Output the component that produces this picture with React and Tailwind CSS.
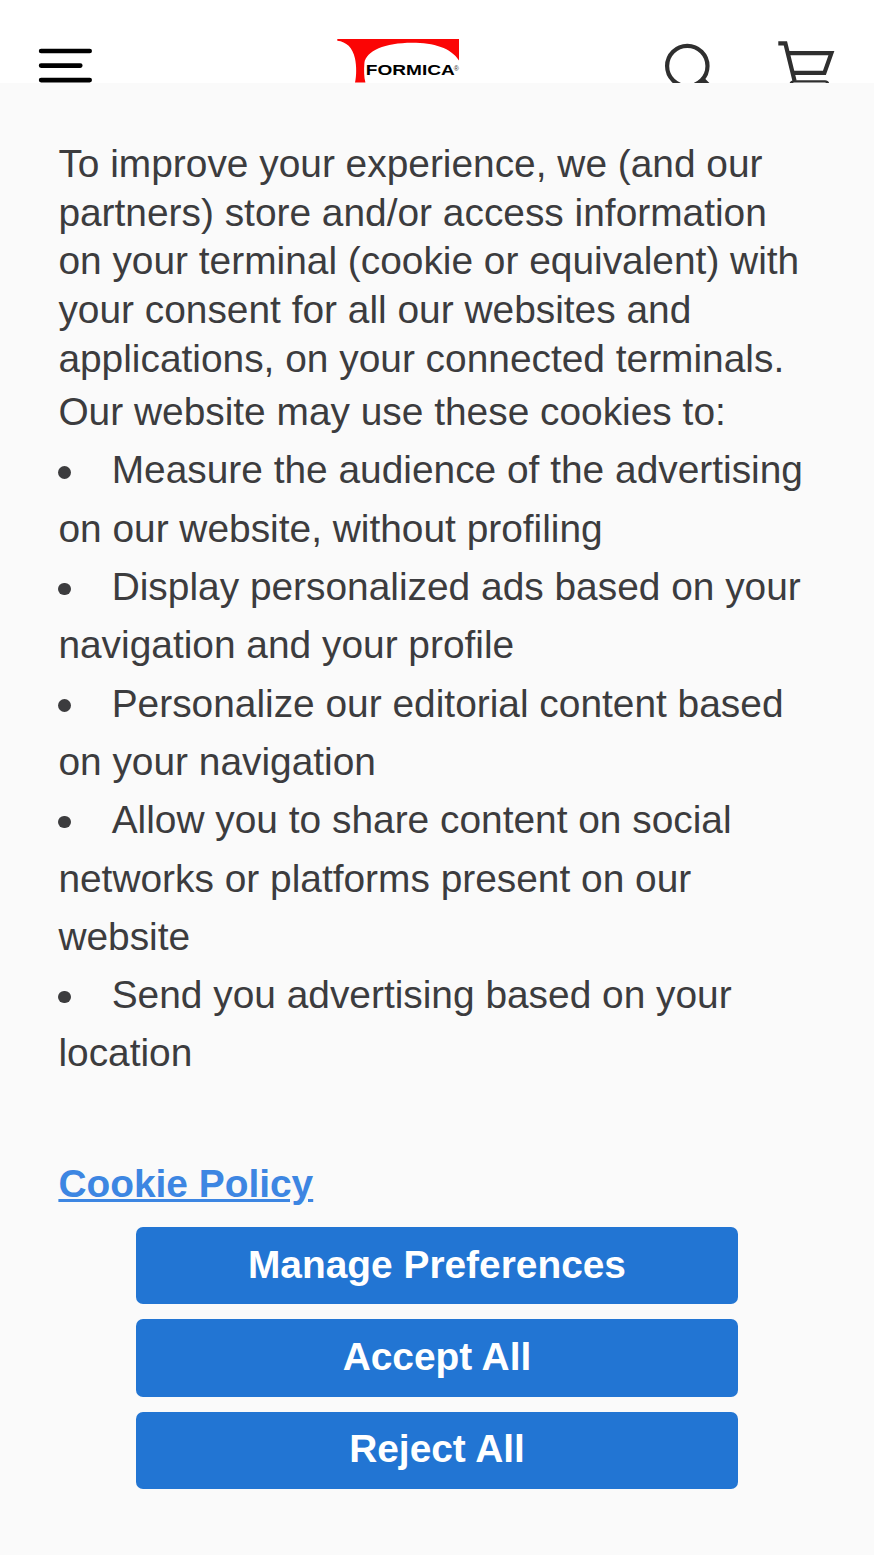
const uses = [
  ["Measure the audience of the advertising", "on our website, without profiling"],
  ["Display personalized ads based on your", "navigation and your profile"],
  ["Personalize our editorial content based", "on your navigation"],
  ["Allow you to share content on social", "networks or platforms present on our", "website"],
  ["Send you advertising based on your", "location"],
];

const actions = ["Manage Preferences", "Accept All", "Reject All"];

function MenuIcon() {
  return (
    <svg width="54" height="36" viewBox="0 0 54 36" fill="none" stroke="#000" strokeWidth="4.6" strokeLinecap="round">
      <path d="M3.1 4H51.7M3.1 18.6H42.3M3.1 33.1H51.7" />
    </svg>
  );
}

function Logo() {
  return (
    <svg width="126" height="46" viewBox="0 0 126 46">
      <path
        d="M0.3 1H122V22.5C114 10 97 4.8 75 4.8C48 4.8 29 13 27.4 25C26.8 32 27 39 28.4 44.6H18C19.6 38 19.6 28 18 20.5C15.5 9.5 9.5 3.8 0.3 2.8Z"
        fill="#fb0505"
      />
      <text
        x="28.8"
        y="37"
        fontSize="14"
        fontWeight="700"
        fontFamily="'Liberation Sans', Arial, sans-serif"
        textLength="89"
        lengthAdjust="spacingAndGlyphs"
      >
        FORMICA
      </text>
      <text x="116.8" y="33" fontSize="7" fontFamily="'Liberation Sans', Arial, sans-serif" fill="#333">
        ®
      </text>
    </svg>
  );
}

function SearchIcon() {
  return (
    <svg width="50" height="60" viewBox="0 0 50 60" fill="none" stroke="#2f2f2f" strokeWidth="4.2">
      <circle cx="23.3" cy="24" r="20.2" />
      <path d="M37.4 36.6L54 53" strokeWidth="5" />
    </svg>
  );
}

function CartIcon() {
  return (
    <svg width="60" height="60" viewBox="0 0 60 60" fill="none" stroke="#2f2f2f" strokeWidth="4.2">
      <path d="M0.3 3.4H7.4L16.6 41" />
      <path d="M10 13.2H53.4L46.4 32.9H15" />
      <path d="M12.5 44.2C13 42.2 14 41.4 16 41.4H47C48.8 41.4 49.8 42.2 50.2 44" strokeWidth="2.4" />
    </svg>
  );
}

export default function App() {
  return (
    <div className="flex h-[1555px] w-[874px] flex-col overflow-hidden bg-white font-['Liberation_Sans',Arial,sans-serif] text-[38.86px] text-[#3c3c3e]">
      <header className="flex h-[82.5px] shrink-0 items-start overflow-hidden bg-white">
        <button className="mt-[47px] ml-[38px]" aria-label="Menu">
          <MenuIcon />
        </button>
        <div className="mt-[38px] ml-[245px]">
          <Logo />
        </div>
        <button className="mt-[42px] ml-[201px]" aria-label="Search">
          <SearchIcon />
        </button>
        <button className="mt-[40px] ml-[64px]" aria-label="Cart">
          <CartIcon />
        </button>
      </header>

      <section className="flex flex-1 flex-col bg-[#fafafa] pt-[57.7px] pl-[58.4px]">
        <p className="leading-[48.6px] whitespace-nowrap">
          To improve your experience, we (and our
          <br />
          partners) store and/or access information
          <br />
          on your terminal (cookie or equivalent) with
          <br />
          your consent for all our websites and
          <br />
          applications, on your connected terminals.
        </p>
        <p className="leading-[58.3px]">Our website may use these cookies to:</p>

        <ul className="leading-[58.3px] whitespace-nowrap">
          {uses.map(([first, ...rest]) => (
            <li key={first}>
              <div className="flex items-center">
                <span className="mt-[3.4px] mr-[40.7px] size-[12.6px] rounded-full bg-[#3c3c3e]" />
                <span>{first}</span>
              </div>
              {rest.map((line) => (
                <div key={line}>{line}</div>
              ))}
            </li>
          ))}
        </ul>

        <a
          href="#"
          className="mt-[72.5px] self-start leading-[58.3px] font-bold text-[#3d86e2] underline"
        >
          Cookie Policy
        </a>

        <div className="mt-[13.4px] ml-[77.6px] flex w-[602px] flex-col gap-[14.8px]">
          {actions.map((label) => (
            <button
              key={label}
              className="flex h-[77.5px] items-center justify-center rounded-[7px] bg-[#2275d3] pb-[2px] font-bold text-white"
            >
              {label}
            </button>
          ))}
        </div>
      </section>
    </div>
  );
}
